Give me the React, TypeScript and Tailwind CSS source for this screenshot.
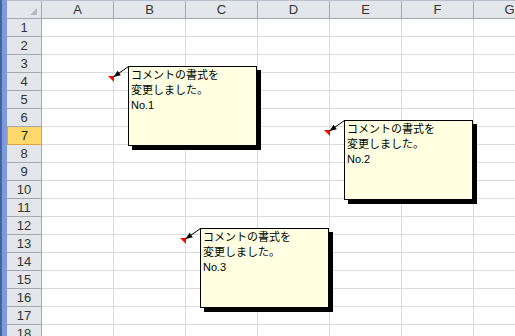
import React from 'react';

const COLS = ['A', 'B', 'C', 'D', 'E', 'F', 'G'];
const ROWS = Array.from({ length: 18 }, (_, i) => i + 1);
const SELECTED_ROW = 7;

// top-right corner of the commented cell (page px)
const COMMENTS = [
  { cx: 113, cy: 76, label: 'No.1' },
  { cx: 329, cy: 130, label: 'No.2' },
  { cx: 185, cy: 238, label: 'No.3' },
];

function arrowHead(x1: number, y1: number, x2: number, y2: number) {
  const dx = x2 - x1;
  const dy = y2 - y1;
  const len = Math.hypot(dx, dy);
  const ux = dx / len;
  const uy = dy / len;
  const bx = x2 - ux * 7;
  const by = y2 - uy * 7;
  const px = -uy * 2.8;
  const py = ux * 2.8;
  return `${x2},${y2} ${bx + px},${by + py} ${bx - px},${by - py}`;
}

function Comment({ cx, cy, label }: { cx: number; cy: number; label: string }) {
  return (
    <div
      className="absolute w-[129px] h-[80px] bg-[#ffffe1] border border-black shadow-[4px_4px_0_0_#000] pt-[1px] pl-[2px] text-[11px] leading-[15px] text-black"
      style={{ left: cx + 15, top: cy - 10, fontFamily: '"Liberation Sans", "Noto Sans CJK JP", sans-serif' }}
    >
      <div>コメントの書式を</div>
      <div>変更しました。</div>
      <div>{label}</div>
    </div>
  );
}

export default function App() {
  return (
    <div
      className="relative w-[515px] h-[336px] overflow-hidden bg-white flex"
      style={{ fontFamily: '"Liberation Sans", "Noto Sans CJK JP", sans-serif' }}
    >
      {/* window frame */}
      <div className="flex shrink-0">
        <div className="w-[2px] bg-[#3f62ad]" />
        <div className="w-[5px] bg-[#7d9bd9]" />
      </div>

      <div className="flex flex-col flex-1">
        <div className="h-[4px] bg-[#eef1f6] border-b border-[#b9c0ca]" />

        {/* column headers */}
        <div className="flex h-[18px] shrink-0">
          <div className="relative w-[35px] shrink-0 bg-[#e3e6eb] border-r border-b border-[#a4a8ae]">
            <div className="absolute right-[4px] bottom-[3px] w-0 h-0 border-l-[7px] border-l-transparent border-b-[7px] border-b-[#b5b9c0]" />
          </div>
          {COLS.map((c) => (
            <div
              key={c}
              className="w-[72px] shrink-0 bg-[#e3e6eb] border-r border-b border-[#a4a8ae] flex items-center justify-center text-[13px] text-[#333]"
            >
              {c}
            </div>
          ))}
        </div>

        {ROWS.map((r) => (
          <div key={r} className="flex h-[18px] shrink-0">
            <div
              className={
                r === SELECTED_ROW
                  ? 'w-[35px] shrink-0 bg-[#ffd86b] border border-t-0 border-[#e3a13b] flex items-center justify-center text-[13px] text-[#222]'
                  : 'w-[35px] shrink-0 bg-[#e3e6eb] border-r border-b border-[#a4a8ae] flex items-center justify-center text-[13px] text-[#333]'
              }
            >
              {r}
            </div>
            {COLS.map((c) => (
              <div key={c} className="w-[72px] shrink-0 border-r border-b border-[#d9dce1]" />
            ))}
          </div>
        ))}
      </div>

      {/* comment markers and connectors */}
      <svg className="absolute inset-0 pointer-events-none" width={515} height={336}>
        {COMMENTS.map(({ cx, cy }) => {
          const sx = cx + 15.5;
          const sy = cy - 9.5;
          const tx = cx + 0.5;
          const ty = cy + 1;
          return (
            <g key={`${cx}-${cy}`}>
              <polygon points={`${cx - 5},${cy} ${cx + 1},${cy} ${cx + 1},${cy + 6}`} fill="#ff0000" />
              <line x1={sx} y1={sy} x2={tx} y2={ty} stroke="#000" strokeWidth={1} />
              <polygon points={arrowHead(sx, sy, tx, ty)} fill="#000" />
            </g>
          );
        })}
      </svg>

      {COMMENTS.map((cm) => (
        <Comment key={cm.label} {...cm} />
      ))}
    </div>
  );
}
